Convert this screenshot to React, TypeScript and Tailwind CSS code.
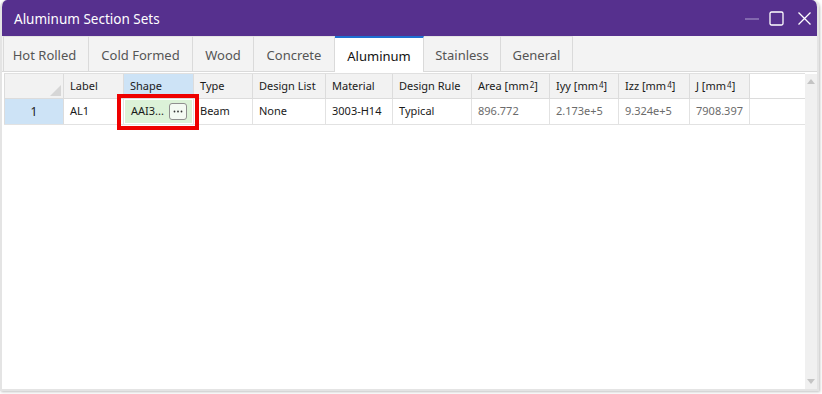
import { Fragment } from "react";

const tabs = ["Hot Rolled", "Cold Formed", "Wood", "Concrete", "Aluminum", "Stainless", "General"];
const tabWidths = ["w-[86px]", "w-[104px]", "w-[61px]", "w-[81px]", "w-[89px]", "w-[77px]", "w-[72px]"];

const Sup = ({ n }: { n: string }) => <sup className="text-[8px] relative -top-[1px] ml-[1px]">{n}</sup>;

const columns = [
  { key: "label", w: "w-[60px]", head: "Label" },
  { key: "shape", w: "w-[70px]", head: "Shape" },
  { key: "type", w: "w-[59px]", head: "Type" },
  { key: "list", w: "w-[73px]", head: "Design List" },
  { key: "mat", w: "w-[67px]", head: "Material" },
  { key: "rule", w: "w-[79px]", head: "Design Rule" },
  { key: "area", w: "w-[78px]", head: <>Area [mm<Sup n="2" />]</> },
  { key: "iyy", w: "w-[69px]", head: <>Iyy [mm<Sup n="4" />]</> },
  { key: "izz", w: "w-[71px]", head: <>Izz [mm<Sup n="4" />]</> },
  { key: "j", w: "w-[60px]", head: <>J [mm<Sup n="4" />]</> },
];

const row: Record<string, string> = {
  label: "AL1",
  type: "Beam",
  list: "None",
  mat: "3003-H14",
  rule: "Typical",
  area: "896.772",
  iyy: "2.173e+5",
  izz: "9.324e+5",
  j: "7908.397",
};

const readOnly = ["area", "iyy", "izz", "j"];

export default function App() {
  return (
    <div className="w-[822px] h-[394px] bg-white font-['Noto_Sans',sans-serif] text-[#1a1a1a]">
      <div className="w-[819px] h-[391px] flex flex-col rounded-t-[7px] overflow-hidden border-l-2 border-b-2 border-r-2 border-[#e4e4e4] shadow-[1px_1px_3px_rgba(0,0,0,0.25)]">
        {/* title bar */}
        <div className="h-[36px] shrink-0 bg-[#56308e] flex items-center pl-[14px] pr-[7px] -mx-[2px]">
          <span className="text-white text-[13.5px] flex-1 pt-[2px]">Aluminum Section Sets</span>
          <div className="flex items-center">
            <svg width="15" height="15" viewBox="0 0 15 15">
              <line x1="0" y1="8" x2="14" y2="8" stroke="#9b87c0" strokeWidth="1.3" />
            </svg>
            <svg className="ml-[9px]" width="15" height="15" viewBox="0 0 15 15">
              <rect x="1" y="1" width="13" height="13" rx="1.5" fill="none" stroke="white" strokeWidth="1.3" />
            </svg>
            <svg className="ml-[13px]" width="15" height="15" viewBox="0 0 15 15">
              <path d="M1.5 1.5 L13.5 13.5 M13.5 1.5 L1.5 13.5" stroke="white" strokeWidth="1.3" />
            </svg>
          </div>
        </div>

        {/* tabs */}
        <div className="h-[36px] shrink-0 bg-[#f3f3f3] flex pl-[1px] border-b border-[#dadada]">
          {tabs.map((t, i) => {
            const active = t === "Aluminum";
            return (
              <div
                key={t}
                className={`${tabWidths[i]} flex items-center justify-center text-[13px] border-r border-[#dadada] pt-[3px] ${
                  active ? "bg-white text-[#111] border-t-2 border-t-[#1f6fd1] -mb-[1px]" : "text-[#555] border-t border-t-[#e4e4e4]"
                } ${i === 0 ? "border-l border-l-[#dadada] pr-[3px]" : ""}`}
              >
                {t}
              </div>
            );
          })}
        </div>

        {/* grid */}
        <div className="flex-1 flex pl-[2px] pt-[1px] relative">
          <div className="flex-1 border-t border-[#e0e0e0] text-[11px]">
            <div className="flex h-[25px] border-b border-[#dcdcdc]">
              <div className="w-[60px] bg-[#f2f2f2] border-l border-r border-[#dcdcdc] relative">
                <svg className="absolute right-[2px] bottom-[2px]" width="11" height="11" viewBox="0 0 11 11">
                  <polygon points="11,0 11,11 0,11" fill="#d6d6d6" />
                </svg>
              </div>
              {columns.map((c) => (
                <div
                  key={c.key}
                  className={`${c.w} px-[6px] flex items-center border-r border-[#dcdcdc] whitespace-nowrap ${
                    c.key === "shape" ? "bg-[#cde3f6]" : "bg-[#f2f2f2]"
                  }`}
                >
                  {c.head}
                </div>
              ))}
            </div>
            <div className="flex h-[26px] border-b border-[#e2e2e2]">
              <div className="w-[60px] bg-[#cde3f6] border-l border-r border-[#dcdcdc] flex items-center justify-center text-[12px]">1</div>
              {columns.map((c) => (
                <Fragment key={c.key}>
                  {c.key === "shape" ? (
                    <div className={`${c.w} relative border-r border-[#e2e2e2] p-[1px]`}>
                      <div className="h-full bg-[#dcf2d8] flex items-center pl-[6px] pr-[5px] gap-[3px]">
                        <span className="flex-1">AAI3...</span>
                        <span className="w-[18px] h-[17px] rounded-[3px] border border-[#8f8f8f] bg-[#f4faf3] flex items-center justify-center">
                          <svg width="10" height="3" viewBox="0 0 10 3">
                            <circle cx="1.5" cy="1.5" r="0.9" fill="#333" />
                            <circle cx="5" cy="1.5" r="0.9" fill="#333" />
                            <circle cx="8.5" cy="1.5" r="0.9" fill="#333" />
                          </svg>
                        </span>
                      </div>
                      <div className="absolute -left-[7px] -top-[5px] w-[82px] h-[36px] border-[4px] border-[#ee0000]" />
                    </div>
                  ) : (
                    <div
                      className={`${c.w} px-[6px] flex items-center border-r border-[#e2e2e2] whitespace-nowrap ${
                        readOnly.includes(c.key) ? "text-[#6b6b6b]" : ""
                      }`}
                    >
                      {row[c.key]}
                    </div>
                  )}
                </Fragment>
              ))}
            </div>
          </div>
          {/* scrollbar */}
          <div className="w-[12px] bg-[#f0f0f0] flex flex-col justify-between items-center py-[5px] mt-[1px]">
            <svg width="8" height="5" viewBox="0 0 8 5">
              <polygon points="4,0 8,5 0,5" fill="#c4c4c4" />
            </svg>
            <svg width="8" height="5" viewBox="0 0 8 5">
              <polygon points="0,0 8,0 4,5" fill="#c4c4c4" />
            </svg>
          </div>
        </div>
      </div>
    </div>
  );
}
